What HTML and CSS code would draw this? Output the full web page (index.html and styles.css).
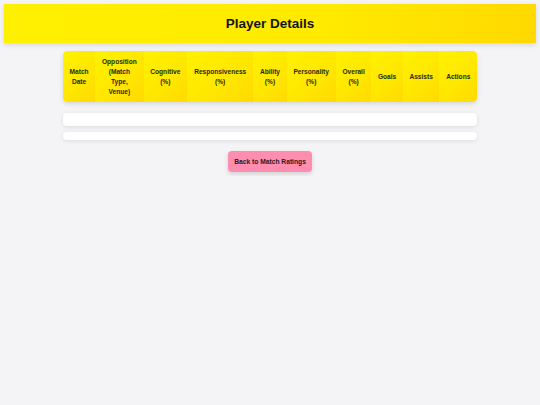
FILE: index.html
```html
<!DOCTYPE html>
<html>
<head>
<meta charset="utf-8">
<link rel="stylesheet" href="styles.css">
</head>
<body>
<header class="top">
  <h1 class="title">Player Details</h1>
</header>
<main class="content">
  <table class="ratings">
    <thead>
      <tr>
        <th>Match<br>Date</th>
        <th>Opposition<br>(Match<br>Type,<br>Venue)</th>
        <th>Cognitive<br>(%)</th>
        <th>Responsiveness<br>(%)</th>
        <th>Ability<br>(%)</th>
        <th>Personality<br>(%)</th>
        <th>Overall<br>(%)</th>
        <th>Goals</th>
        <th>Assists</th>
        <th>Actions</th>
      </tr>
    </thead>
  </table>
  <div class="row row-a"></div>
  <div class="row row-b"></div>
  <button class="back">Back to Match Ratings</button>
</main>
</body>
</html>
```
FILE: styles.css
```css
html, body {
  margin: 0;
  background: #f4f4f7;
  font-family: "Liberation Sans", Arial, sans-serif;
}
body {
  padding: 4px;
}
.top {
  height: 39px;
  background: linear-gradient(100deg, #fff000 0%, #ffea00 60%, #ffd900 100%);
  box-shadow: 0 2px 5px rgba(0,0,0,0.12);
  display: flex;
  align-items: center;
  justify-content: center;
}
.title {
  margin: 0;
  font-size: 13.5px;
  font-weight: bold;
  color: #151515;
}
.content {
  display: flex;
  flex-direction: column;
  align-items: center;
  padding-top: 8px;
}
.ratings {
  width: 414px;
  border-collapse: collapse;
  border-radius: 5px;
  overflow: hidden;
  box-shadow: 0 2px 5px rgba(0,0,0,0.12);
  background: #ffe800;
}
.ratings th {
  padding: 5.5px 6px;
  height: 40px;
  font-size: 6.6px;
  line-height: 10px;
  font-weight: bold;
  color: #2a2a14;
  background: linear-gradient(135deg, #fff200 0%, #ffe600 60%, #ffda00 100%);
  text-align: center;
  vertical-align: middle;
}
.row {
  width: 414px;
  background: #fff;
  border-radius: 4px;
  box-shadow: 0 1px 4px rgba(0,0,0,0.1);
}
.row-a {
  margin-top: 11px;
  height: 13px;
}
.row-b {
  margin-top: 6px;
  height: 8px;
}
.back {
  margin-top: 11px;
  width: 84px;
  height: 21px;
  padding: 0;
  border: none;
  border-radius: 4px;
  background: #ff8db0;
  box-shadow: 0 2px 4px rgba(0,0,0,0.15);
  font-family: "Liberation Sans", Arial, sans-serif;
  font-size: 6.7px;
  font-weight: bold;
  color: #2a1a20;
}
```
